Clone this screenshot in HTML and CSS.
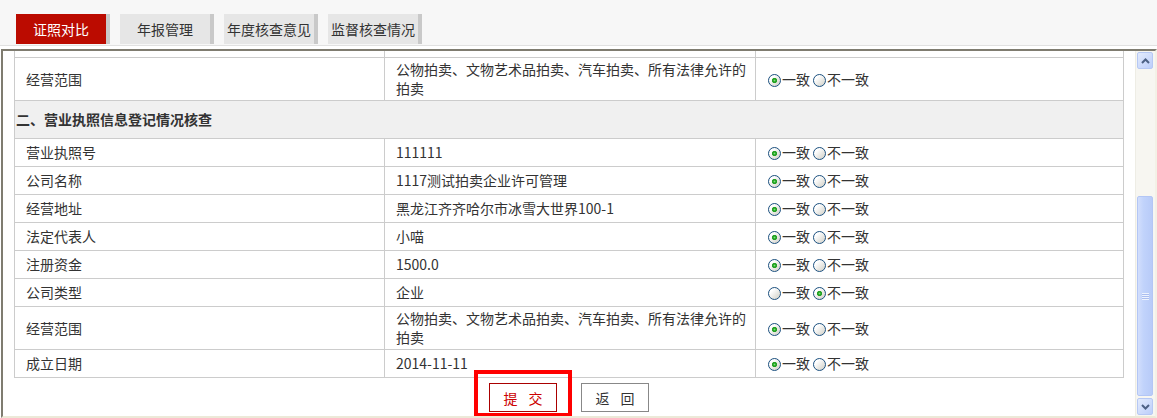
FILE: index.html
```html
<!DOCTYPE html>
<html lang="zh-CN">
<head>
    <meta charset="UTF-8">
    <title>证照对比</title>
    <link rel="stylesheet" href="styles.css">
</head>
<body>

<div class="tab-bar">
    <a class="tab tab-on">证照对比</a>
    <a class="tab">年报管理</a>
    <a class="tab">年度核查意见</a>
    <a class="tab">监督核查情况</a>
</div>

<div class="frame">
    <div class="content">
        <table class="check-table">
            <colgroup>
                <col class="col-label">
                <col class="col-value">
                <col class="col-opt">
            </colgroup>
            <tr class="cut-row"><td></td><td></td><td></td></tr>
            <tr class="tall-row">
                <td>经营范围</td>
                <td>公物拍卖、文物艺术品拍卖、汽车拍卖、所有法律允许的拍卖</td>
                <td class="opt"><input type="radio" name="r0" checked>一致<input type="radio" name="r0">不一致</td>
            </tr>
            <tr class="section-row">
                <td colspan="3">二、营业执照信息登记情况核查</td>
            </tr>
            <tr>
                <td>营业执照号</td>
                <td>111111</td>
                <td class="opt"><input type="radio" name="r1" checked>一致<input type="radio" name="r1">不一致</td>
            </tr>
            <tr>
                <td>公司名称</td>
                <td>1117测试拍卖企业许可管理</td>
                <td class="opt"><input type="radio" name="r2" checked>一致<input type="radio" name="r2">不一致</td>
            </tr>
            <tr>
                <td>经营地址</td>
                <td>黑龙江齐齐哈尔市冰雪大世界100-1</td>
                <td class="opt"><input type="radio" name="r3" checked>一致<input type="radio" name="r3">不一致</td>
            </tr>
            <tr>
                <td>法定代表人</td>
                <td>小喵</td>
                <td class="opt"><input type="radio" name="r4" checked>一致<input type="radio" name="r4">不一致</td>
            </tr>
            <tr>
                <td>注册资金</td>
                <td>1500.0</td>
                <td class="opt"><input type="radio" name="r5" checked>一致<input type="radio" name="r5">不一致</td>
            </tr>
            <tr>
                <td>公司类型</td>
                <td>企业</td>
                <td class="opt"><input type="radio" name="r6">一致<input type="radio" name="r6" checked>不一致</td>
            </tr>
            <tr class="tall-row">
                <td>经营范围</td>
                <td>公物拍卖、文物艺术品拍卖、汽车拍卖、所有法律允许的拍卖</td>
                <td class="opt"><input type="radio" name="r7" checked>一致<input type="radio" name="r7">不一致</td>
            </tr>
            <tr>
                <td>成立日期</td>
                <td>2014-11-11</td>
                <td class="opt"><input type="radio" name="r8" checked>一致<input type="radio" name="r8">不一致</td>
            </tr>
        </table>

        <div class="actions">
            <span class="mark-wrap">
                <button class="btn btn-submit">提 交</button>
                <span class="mark"></span>
            </span>
            <button class="btn">返 回</button>
        </div>
    </div>

    <div class="scrollbar">
        <div class="sb-btn">
            <svg width="9" height="6" viewBox="0 0 9 6"><path d="M1 5 L4.5 1.5 L8 5" fill="none" stroke="#4d6185" stroke-width="2"/></svg>
        </div>
        <div class="sb-track">
            <div class="sb-thumb"><span class="grip"></span></div>
        </div>
        <div class="sb-btn">
            <svg width="9" height="6" viewBox="0 0 9 6"><path d="M1 1 L4.5 4.5 L8 1" fill="none" stroke="#4d6185" stroke-width="2"/></svg>
        </div>
    </div>
</div>

</body>
</html>
```

FILE: styles.css
```css
body {
    margin: 0;
    font-family: "Microsoft YaHei", "Noto Sans CJK SC", sans-serif;
    font-size: 14px;
    color: #333;
    background-color: #fff;
}

/* top tabs */
.tab-bar {
    display: flex;
    height: 31px;
    padding: 14px 0 0 16px;
    background-color: #f7f7f7;
    border-bottom: 1px solid #e1e1e1;
}
.tab {
    width: 90px;
    height: 30px;
    line-height: 30px;
    text-align: center;
    background-color: #e6e6e6;
    border-right: 4px solid #c9c9c9;
    margin-right: 10px;
    color: #333;
}
.tab-on {
    background-color: #bb0b00;
    color: #fff;
}

/* inner frame */
.frame {
    display: flex;
    margin: 3px 0 0 1px;
    height: 365px;
    border: 2px solid;
    border-color: #7f7c70 #f3f1e6 #ece9d8 #7f7c70;
    background-color: #fff;
}
.content {
    flex: 1;
    padding: 0 11px;
    overflow: hidden;
}

.check-table {
    width: 100%;
    table-layout: fixed;
    border-collapse: collapse;
}
.col-label { width: 370px; }
.col-value { width: 371px; }
.check-table td {
    border: 1px solid #ccc;
    height: 27px;
    padding: 0 6px 0 11px;
    line-height: 19px;
    vertical-align: middle;
}
.check-table .cut-row td {
    border-top: none;
    height: 6px;
}
.check-table .tall-row td {
    height: 42px;
}
.check-table .section-row td {
    height: 37px;
    padding-left: 1px;
    font-weight: bold;
    background-color: #f0f0f0;
}
.check-table td.opt {
    padding-left: 9px;
}
.opt input {
    appearance: none;
    -webkit-appearance: none;
    box-sizing: border-box;
    width: 13px;
    height: 13px;
    margin: 0 1px 0 3px;
    border: 1px solid #1c5180;
    border-radius: 50%;
    background: linear-gradient(135deg, #fff 25%, #d6d5cd 90%);
    vertical-align: -2px;
}
.opt input:checked {
    background: radial-gradient(circle, #7ee07e 0, #21a121 1.5px, #21a121 2.2px, transparent 3px),
                linear-gradient(135deg, #fff 25%, #d6d5cd 90%);
}

/* buttons */
.actions {
    display: flex;
    justify-content: center;
    gap: 24px;
    margin-top: 5px;
}
.mark-wrap {
    position: relative;
    display: flex;
}
.btn {
    box-sizing: border-box;
    width: 68px;
    height: 29px;
    padding: 0;
    font-family: inherit;
    font-size: 14px;
    word-spacing: 8px;
    color: #333;
    background-color: #fff;
    border: 1px solid #888;
}
.btn-submit {
    color: #c00;
    border-color: #a00;
}
.mark {
    position: absolute;
    top: -13px;
    left: -15px;
    right: -15px;
    bottom: -5px;
    border: 4px solid #f00;
}

/* xp style scrollbar */
.scrollbar {
    display: flex;
    flex-direction: column;
    width: 16px;
    padding: 1px 2px 1px 1px;
    background-color: #f7f6f1;
    border-left: 1px solid #eeede5;
}
.sb-btn {
    display: flex;
    align-items: center;
    justify-content: center;
    height: 15px;
    border: 1px solid #b6c8f4;
    border-radius: 2px;
    background: linear-gradient(135deg, #e3ebfd, #bccefa);
}
.sb-track {
    flex: 1;
    display: flex;
    flex-direction: column;
    justify-content: flex-end;
    padding-bottom: 2px;
}
.sb-thumb {
    display: flex;
    align-items: center;
    justify-content: center;
    box-sizing: border-box;
    height: 200px;
    border: 1px solid #b3c6f5;
    border-radius: 2px;
    background: linear-gradient(to right, #d2defc, #c1d3fb 40%, #b8cbf8);
}
.grip {
    width: 7px;
    height: 7px;
    background: repeating-linear-gradient(to bottom, #eef3fe 0, #eef3fe 1px, #aabef0 1px, #aabef0 2px);
}
```
